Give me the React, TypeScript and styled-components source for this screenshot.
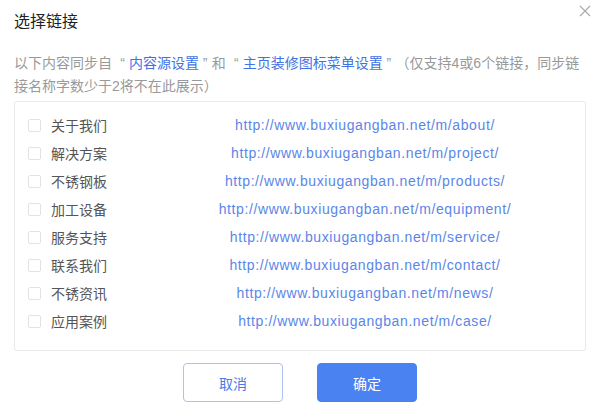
import React from "react";
import styled, { createGlobalStyle } from "styled-components";

const links = [
  { name: "关于我们", url: "http://www.buxiugangban.net/m/about/" },
  { name: "解决方案", url: "http://www.buxiugangban.net/m/project/" },
  { name: "不锈钢板", url: "http://www.buxiugangban.net/m/products/" },
  { name: "加工设备", url: "http://www.buxiugangban.net/m/equipment/" },
  { name: "服务支持", url: "http://www.buxiugangban.net/m/service/" },
  { name: "联系我们", url: "http://www.buxiugangban.net/m/contact/" },
  { name: "不锈资讯", url: "http://www.buxiugangban.net/m/news/" },
  { name: "应用案例", url: "http://www.buxiugangban.net/m/case/" },
];

const GlobalStyle = createGlobalStyle`
  html, body {
    margin: 0;
    padding: 0;
    background: #fff;
  }
  body {
    font-family: "Liberation Sans", "Noto Sans CJK SC", sans-serif;
  }
`;

const App = () => {
  return (
    <>
      <GlobalStyle />
      <StyledDialog>
        <StyledHeader>
          <span className="title">选择链接</span>
          <CloseButton aria-label="close">
            <svg width="12" height="12" viewBox="0 0 12 12">
              <path
                d="M1 1L11 11M11 1L1 11"
                stroke="#a8a8a8"
                strokeWidth="1.1"
                fill="none"
              />
            </svg>
          </CloseButton>
        </StyledHeader>
        <StyledTip>
          以下内容同步自<Quote>“</Quote> <a>内容源设置</a> <Quote close>”</Quote>和
          <Quote>“</Quote> <a>主页装修图标菜单设置</a> <Quote close>”</Quote>
          （仅支持4或6个链接，同步链
          <br />
          接名称字数少于2将不在此展示）
        </StyledTip>
        <StyledList>
          {links.map((item) => (
            <StyledRow key={item.url}>
              <div className="label">
                <Checkbox />
                <span>{item.name}</span>
              </div>
              <span className="url">{item.url}</span>
            </StyledRow>
          ))}
        </StyledList>
        <StyledFooter>
          <Button>取消</Button>
          <Button primary>确定</Button>
        </StyledFooter>
      </StyledDialog>
    </>
  );
};

const StyledDialog = styled.div`
  width: 602px;
  height: 414px;
  box-sizing: border-box;
  padding: 0 16px 0 14px;
  background: #fff;
`;

const StyledHeader = styled.div`
  display: flex;
  align-items: center;
  justify-content: space-between;
  height: 40px;
  .title {
    font-size: 16px;
    color: #222;
    font-family: "Noto Sans CJK SC", sans-serif;
  }
`;

const CloseButton = styled.button`
  display: flex;
  align-items: center;
  justify-content: center;
  width: 14px;
  height: 14px;
  padding: 0;
  border: none;
  background: none;
  margin: -18px -6px 0 0;
`;

const StyledTip = styled.div`
  margin-top: 12px;
  font-size: 14px;
  line-height: 23px;
  color: #999;
  white-space: nowrap;
  a {
    color: #3f72e4;
  }
`;

const Quote = styled.span<{ close?: boolean }>`
  display: inline-block;
  width: ${(p) => (p.close ? "9px" : "13px")};
  text-align: ${(p) => (p.close ? "left" : "right")};
`;

const StyledList = styled.div`
  margin-top: 3px;
  border: 1px solid #e9e9e9;
  border-radius: 2px;
  height: 250px;
  box-sizing: border-box;
  padding-top: 9px;
`;

const StyledRow = styled.div`
  display: grid;
  grid-template-columns: 130px 1fr;
  align-items: center;
  height: 28px;
  .label {
    display: flex;
    align-items: center;
    gap: 10px;
    padding-left: 13px;
    font-size: 14px;
    color: #555;
    font-family: "Noto Sans CJK SC", sans-serif;
  }
  .url {
    text-align: center;
    font-size: 14px;
    letter-spacing: 0.6px;
    color: #5a86e8;
  }
`;

const Checkbox = styled.span`
  display: inline-block;
  width: 13px;
  height: 13px;
  border: 1px solid #e2e2e2;
  border-radius: 2px;
  box-sizing: border-box;
`;

const StyledFooter = styled.div`
  display: flex;
  justify-content: center;
  gap: 34px;
  margin-top: 12px;
`;

const Button = styled.button<{ primary?: boolean }>`
  width: 100px;
  height: 39px;
  border-radius: 4px;
  font-size: 14px;
  font-family: "Noto Sans CJK SC", sans-serif;
  border: 1px solid ${(p) => (p.primary ? "#4b82f2" : "#adc2ec")};
  background: ${(p) => (p.primary ? "#4b82f2" : "#fff")};
  color: ${(p) => (p.primary ? "#fff" : "#4a7be6")};
`;

export default App;
